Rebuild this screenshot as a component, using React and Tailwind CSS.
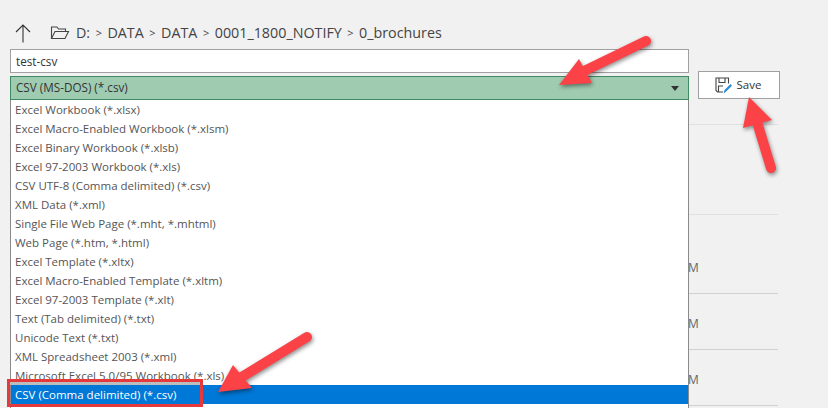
const font = { fontFamily: '"Open Sans", "Noto Sans", sans-serif' };
const items = [
  "Excel Workbook (*.xlsx)",
  "Excel Macro-Enabled Workbook (*.xlsm)",
  "Excel Binary Workbook (*.xlsb)",
  "Excel 97-2003 Workbook (*.xls)",
  "CSV UTF-8 (Comma delimited) (*.csv)",
  "XML Data (*.xml)",
  "Single File Web Page (*.mht, *.mhtml)",
  "Web Page (*.htm, *.html)",
  "Excel Template (*.xltx)",
  "Excel Macro-Enabled Template (*.xltm)",
  "Excel 97-2003 Template (*.xlt)",
  "Text (Tab delimited) (*.txt)",
  "Unicode Text (*.txt)",
  "XML Spreadsheet 2003 (*.xml)",
  "Microsoft Excel 5.0/95 Workbook (*.xls)",
];
const crumbs = ["D:", "DATA", "DATA", "0001_1800_NOTIFY", "0_brochures"];

function Arrow({ d, head }) {
  return (
    <g>
      <path d={d} fill="none" stroke="#fb4246" strokeWidth="10" strokeLinecap="round" />
      <polygon points={head} fill="#fb4246" />
    </g>
  );
}

export default function App() {
  return (
    <div className="relative w-[828px] h-[408px] overflow-hidden bg-[#f1f1f1] text-[#444]" style={font}>
      <div className="flex pl-[10px]">
        <div className="relative z-10 w-[679px] shrink-0 flex flex-col">
          <div className="flex items-center h-[49px] pt-[16px] pl-[5px]">
            <svg width="16" height="19" viewBox="0 0 16 19" fill="none" stroke="#333" strokeWidth="1.1" className="shrink-0 mt-[2px]">
              <path d="M8 18.5V1M1 8l7-7 7 7" />
            </svg>
            <svg width="20" height="15" viewBox="0 0 20 15" fill="none" stroke="#444" strokeWidth="1.1" className="ml-[19px] shrink-0">
              <path d="M1.5 13.5V2h5.5l1.5 2h7v2.5M1.5 13.5h13.5l3.5-7H5L1.5 13.5z" />
            </svg>
            <div className="flex items-center ml-[6px] text-[14.3px] leading-5 text-[#444] whitespace-nowrap">
              {crumbs.map((c, i) => (
                <span key={i} className="flex items-center">
                  {i > 0 && <span className="mx-[5.5px] text-[11px]">&gt;</span>}
                  {c}
                </span>
              ))}
            </div>
          </div>
          <div className="h-[24px] border border-[#a0a0a0] bg-white pl-[5px] pt-[1px] flex items-center text-[11.7px] text-[#333]">test-csv</div>
          <div className="mt-[3px] h-[24px] border border-[#3f8a62] bg-[#9fcbb1] pl-[5px] pr-[9px] flex items-center justify-between text-[11.7px] text-[#333]">
            <span>CSV (MS-DOS) (*.csv)</span>
            <span className="w-0 h-0 border-x-[4px] border-x-transparent border-t-[5px] border-t-[#333]"></span>
          </div>
          <div className="bg-white border-x border-[#8a8a8a] h-[320px]">
            {items.map((t) => (
              <div key={t} className="h-[19px] pl-[4px] flex items-center text-[11.5px] text-[#555] whitespace-nowrap">{t}</div>
            ))}
            <div className="h-[19px] pl-[4px] flex items-center text-[11.5px] text-white bg-[#0078d7] whitespace-nowrap">CSV (Comma delimited) (*.csv)</div>
          </div>
        </div>
        <div className="w-[89px] shrink-0 pt-[71px] flex flex-col">
          <div className="ml-[9px] w-[82px] h-[28px] border border-[#a0a0a0] bg-white flex items-center justify-center gap-[5px] pr-[2px] text-[11.5px] text-[#333]">
            <svg width="17" height="17" viewBox="0 0 17 17" fill="none" className="shrink-0">
              <path d="M8 15H2.5L1 13.5V1h12.5v5.5" stroke="#444" strokeWidth="1.1" />
              <path d="M4 1v4.5h6V1M3.5 15V9H8" stroke="#444" strokeWidth="1.1" />
              <path d="M8.5 16.5l1-3.5 6-6 1.5 1.8-6 6z" fill="#2e8fd8" />
            </svg>
            Save
          </div>
          <div className="mt-[25px] h-px bg-[#e0e0e0]"></div>
          <div className="mt-[89px] h-px bg-[#e0e0e0]"></div>
          <div className="h-[79px] border-b border-[#d0d0d0] flex items-end pb-[19px] text-[12px] text-[#666] leading-none"><span className="-ml-[1px]">M</span></div>
          <div className="h-[56px] border-b border-[#d0d0d0] flex items-end pb-[19px] text-[12px] text-[#666] leading-none"><span className="-ml-[1px]">M</span></div>
          <div className="h-[56px] border-b border-[#d0d0d0] flex items-end pb-[19px] text-[12px] text-[#666] leading-none"><span className="-ml-[1px]">M</span></div>
        </div>
      </div>
      <div className="absolute left-[7px] top-[379px] w-[196px] h-[28px] border-[3px] border-[#e5393b] z-20 shadow-[inset_0_3px_0_#bdbdbd]"></div>
      <svg width="828" height="408" viewBox="0 0 828 408" className="absolute inset-0 z-30 drop-shadow-[1px_2px_2px_rgba(0,0,0,0.45)]">
        <Arrow d="M646 41L578 74" head="579,59 592,83 559,85" />
        <Arrow d="M771 168L757 122" head="749,97 772,120 743,128" />
        <Arrow d="M307 337L240 378" head="233,365 252,388 218,392" />
      </svg>
    </div>
  );
}
